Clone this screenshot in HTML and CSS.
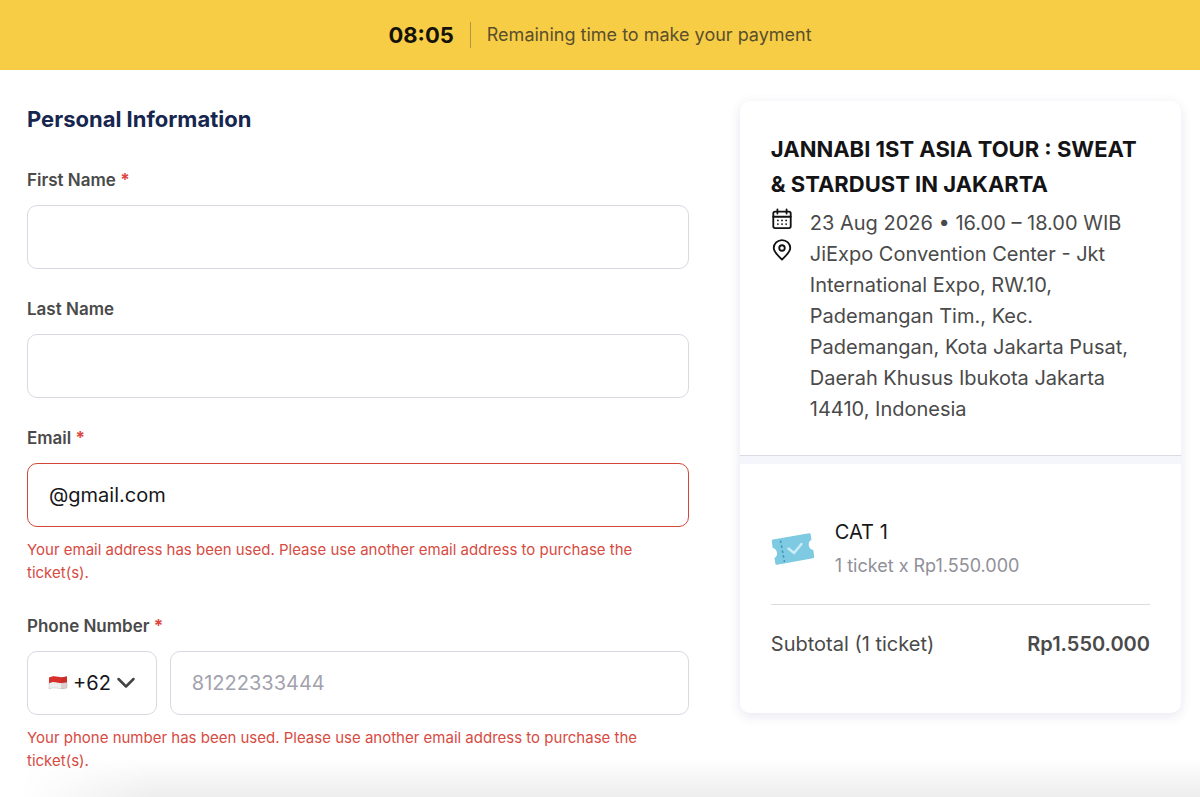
FILE: index.html
```html
<!DOCTYPE html>
<html lang="en">
<head>
<meta charset="utf-8">
<meta name="viewport" content="width=device-width, initial-scale=1">
<title>Personal Information</title>
<link rel="stylesheet" href="styles.css">
</head>
<body>
<header class="timer">
  <strong class="timer-clock">08:05</strong>
  <span class="timer-text">Remaining time to make your payment</span>
</header>
<main class="checkout">
  <form class="form">
    <h1 class="form-title">Personal Information</h1>
    <div class="field">
      <label class="label" for="first">First Name <span class="required">*</span></label>
      <input class="input" id="first" type="text">
    </div>
    <div class="field">
      <label class="label" for="last">Last Name</label>
      <input class="input" id="last" type="text">
    </div>
    <div class="field">
      <label class="label" for="email">Email <span class="required">*</span></label>
      <input class="input input-invalid" id="email" type="text" value="@gmail.com" aria-describedby="email-error">
      <p class="error" id="email-error">Your email address has been used. Please use another email address to purchase the ticket(s).</p>
    </div>
    <div class="field">
      <label class="label" for="phone">Phone Number <span class="required">*</span></label>
      <div class="phone">
        <button class="country" type="button" aria-label="Country code +62">
          <svg class="flag" viewBox="0 0 20 16" aria-hidden="true">
            <path d="M1 8C5 6.200 7 6.800 10 7.500S16 7.800 19 7V13C15 14 13 14 10 13.300S5 12.700 1 14Z" fill="#efeeee" stroke="#bdbcbc" stroke-width=".5"/>
            <path d="M1 2.500C5 .8 7 1.100 10 1.800S16 2 19 1.200V7.200C16 8 13 8.400 10 7.700S5 6.400 1 8.300Z" fill="#d92f2b"/>
            <path d="M13 2.200Q16 2 19 1.200V13Q16 14 13 13.900Z" fill="#7c2020" opacity=".15"/>
          </svg>
          <span>+62</span>
          <svg class="chevron" viewBox="0 0 20 20" aria-hidden="true"><path d="M2.500 6 10 13.500 17.500 6"/></svg>
        </button>
        <input class="input" id="phone" type="tel" placeholder="81222333444" aria-describedby="phone-error">
      </div>
      <p class="error" id="phone-error">Your phone number has been used. Please use another email address to purchase the ticket(s).</p>
    </div>
  </form>
  <aside class="card">
    <section class="event">
      <h2 class="event-title">JANNABI 1ST ASIA TOUR : SWEAT &amp; STARDUST IN JAKARTA</h2>
      <div class="detail">
        <svg class="icon" viewBox="0 0 24 24" aria-hidden="true">
          <rect x="2.500" y="4" width="19" height="18" rx="2"/>
          <path d="M2.500 9.500H21.500M7 1.500V6M17 1.500V6"/>
          <path class="dots" d="M7.500 13.500h.01M12 13.500h.01M16.500 13.500h.01M7.500 17.500h.01M12 17.500h.01M16.500 17.500h.01"/>
        </svg>
        <span>23 Aug 2026 • 16.00 – 18.00 WIB</span>
      </div>
      <div class="detail">
        <svg class="icon" viewBox="0 0 24 24" aria-hidden="true">
          <path d="M12 22.500C9 19 3 14.700 3 9.800A9 8.600 0 0 1 21 9.800C21 14.700 15 19 12 22.500Z"/>
          <circle cx="12" cy="9.800" r="3"/>
        </svg>
        <span>JiExpo Convention Center - Jkt International Expo, RW.10, Pademangan Tim., Kec. Pademangan, Kota Jakarta Pusat, Daerah Khusus Ibukota Jakarta 14410, Indonesia</span>
      </div>
    </section>
    <section class="order">
      <div class="item">
        <svg class="ticket" viewBox="0 0 44 34" aria-hidden="true">
          <path d="M2 7.500 38 1.200Q39.500 1 39.700 2.500L40.500 7.800A5.500 5.500 0 0 0 42.300 18L43.200 24.500Q43.400 26 42 26.300L6 32.800Q4.500 33 4.300 31.500L3.500 26A5.500 5.500 0 0 0 1.700 16L.8 9.200Q.6 7.800 2 7.500Z" fill="#7dcae2"/>
          <path d="M9.500 8.500 13.500 30" fill="none" stroke="#3f96b6" stroke-width="1.500" stroke-dasharray="2.500 2.500"/>
          <path d="M17.500 16.500 23 21 30.500 12" fill="none" stroke="#cdecf7" stroke-width="2.500" stroke-linecap="round" stroke-linejoin="round"/>
        </svg>
        <div>
          <h3 class="item-name">CAT 1</h3>
          <p class="item-price">1 ticket x Rp1.550.000</p>
        </div>
      </div>
      <div class="subtotal">
        <span>Subtotal (1 ticket)</span>
        <strong class="total">Rp1.550.000</strong>
      </div>
    </section>
  </aside>
</main>
<div class="bottom-shade"></div>
</body>
</html>
```
FILE: styles.css
```css
* { box-sizing: border-box; }
html { background: #fff; }
body {
  margin: 0;
  min-height: 100vh;
  position: relative;
  overflow-x: hidden;
  font-family: Inter, "Liberation Sans", sans-serif;
  font-size: 20px;
  color: #4a4a4a;
}
h1, h2, h3, p { margin: 0; }
.timer {
  display: flex;
  align-items: center;
  justify-content: center;
  padding: 22px 16px;
  background: #f7cd46;
  line-height: 26px;
}
.timer-clock {
  padding-right: 16px;
  border-right: 1px solid #b3943a;
  font-size: 22px;
  color: #14120b;
}
.timer-text {
  padding-left: 16px;
  font-size: 18px;
  color: #5a4f2d;
}
.checkout {
  display: grid;
  grid-template-columns: 3fr 2fr;
  gap: 51px;
  align-items: start;
  padding: 31px 19px 24px 27px;
}
.form {
  display: grid;
  gap: 28px;
  padding-top: 2px;
}
.form-title {
  margin-bottom: 5px;
  font-size: 22px;
  line-height: 32px;
  font-weight: 700;
  color: #17264f;
}
.label {
  display: block;
  margin-bottom: 13px;
  font-size: 17px;
  line-height: 24px;
  font-weight: 600;
}
.required { font-weight: 700; color: #e04640; }
.input, .country {
  height: 64px;
  border: 1px solid #d9d9e3;
  border-radius: 10px;
  background: #fff;
  font: inherit;
  color: #17171b;
}
.input {
  display: block;
  width: 100%;
  min-width: 0;
  padding: 0 21px;
}
.input::placeholder { color: #a2a2ae; opacity: 1; }
.input-invalid { border-color: #d44638; }
.error {
  margin: 11px 0 2px;
  font-size: 15px;
  line-height: 23px;
  color: #d64b42;
}
.phone {
  display: grid;
  grid-template-columns: auto 1fr;
  gap: 13px;
}
.country {
  display: flex;
  align-items: center;
  gap: 5px;
  padding: 0 20px;
}
.flag { width: 20px; height: 16px; }
.chevron {
  width: 20px;
  height: 20px;
  fill: none;
  stroke: #444;
  stroke-width: 2.5;
  stroke-linecap: round;
  stroke-linejoin: round;
}
.card {
  overflow: hidden;
  border-radius: 10px;
  background: #fff;
  box-shadow: 0 3px 12px rgba(60, 60, 130, .12);
}
.event {
  padding: 31px 31px 30px;
  border-bottom: 1px solid #d9dce3;
}
.event-title {
  margin-bottom: 6px;
  font-size: 22px;
  line-height: 35px;
  font-weight: 700;
  color: #141416;
}
.detail {
  display: grid;
  grid-template-columns: 22px 1fr;
  gap: 17px;
  line-height: 31px;
}
.icon {
  width: 22px;
  height: 22px;
  fill: none;
  stroke: #111;
  stroke-width: 2;
  stroke-linecap: round;
  stroke-linejoin: round;
}
.order {
  padding: 51px 31px 53px;
  border-top: 8px solid #f5f6fb;
}
.item {
  display: grid;
  grid-template-columns: 44px 1fr;
  gap: 20px;
  align-items: center;
  padding-bottom: 22px;
  border-bottom: 1px solid #dcdcdf;
}
.ticket { width: 44px; height: 34px; }
.item-name {
  font-size: 20px;
  line-height: 34px;
  font-weight: 400;
  color: #17171b;
}
.item-price {
  font-size: 18px;
  line-height: 33px;
  color: #909098;
}
.subtotal {
  display: flex;
  justify-content: space-between;
  gap: 16px;
  padding-top: 24px;
  line-height: 31px;
}
.total { font-weight: 600; }
.bottom-shade {
  position: absolute;
  right: 0;
  bottom: 0;
  left: 0;
  height: 40px;
  background: linear-gradient(rgba(0, 0, 0, 0), rgba(0, 0, 0, .07));
  mask-image: linear-gradient(90deg, transparent 20px, #000 150px);
  pointer-events: none;
}
```
